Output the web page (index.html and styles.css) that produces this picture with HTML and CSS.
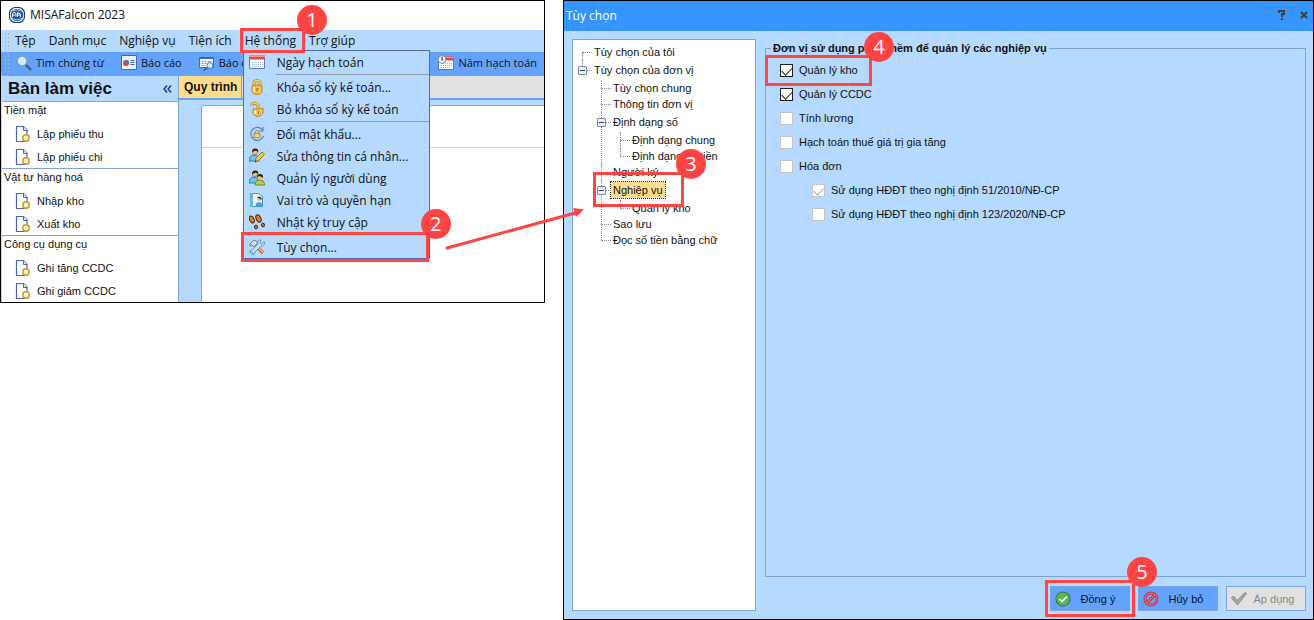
FILE: index.html
```html
<!DOCTYPE html>
<html lang="vi">
<head>
    <meta charset="UTF-8">
    <meta name="viewport" content="width=device-width, initial-scale=1.0">
    <title>MISAFalcon 2023 - Tùy chọn</title>
    <link rel="stylesheet" href="styles.css">
</head>
<body>
    <!-- Shared icons -->
    <svg class="sprite" aria-hidden="true">
        <symbol id="doc" viewBox="0 0 16 16">
            <path d="M1.500 .5h7l3.500 3.500v11.500h-10.500z" fill="#fff" stroke="#4a64ae" stroke-width="1.200"/>
            <path d="M8.500 .5v4h4" fill="#dfe8fb" stroke="#4a64ae"/>
            <circle cx="11" cy="12" r="3.200" fill="#fff3c4" stroke="#c69c33" stroke-width="1.500"/>
        </symbol>
        <symbol id="calendar" viewBox="0 0 16 16">
            <path d="M.5 2.500h15v12h-15z" fill="#fff" stroke="#5d79b4"/>
            <path d="M0 1.500h16v4H0z" fill="#d84a4e"/>
            <path d="M0 2.500h16" stroke="#ef9999"/>
            <path d="M3 8.500h11M3 10.500h11M3 12.500h9" stroke="#9bacd2" stroke-dasharray="1 1"/>
        </symbol>
        <symbol id="lock" viewBox="0 0 16 16">
            <path d="M5 8V4.500a3 3 0 0 1 6 0V8" fill="none" stroke="#b98a25" stroke-width="3"/>
            <path d="M5 8V4.500a3 3 0 0 1 6 0V8" fill="none" stroke="#f5d873" stroke-width="1.300"/>
            <path d="M3 7q5-2 10 0v5q0 3-5 3.500-5-.5-5-3.500z" fill="#f2c64d" stroke="#b98a25"/>
            <path d="M5 8v5" stroke="#fff0a8" stroke-width="1.500"/>
            <path d="M8 9v3.500M9 9v1" stroke="#8a6518"/>
        </symbol>
        <symbol id="people" viewBox="0 0 16 16">
            <path d="M0 13q0-6 5-6 4 0 5 4v2z" fill="#70bff0" stroke="#2f7dbb"/>
            <circle cx="6" cy="4" r="2.700" fill="#efc36b" stroke="#8b672b" stroke-width=".6"/>
            <path d="M3 4q0-4 4-3.500Q10 1 9 4L7 2.500z" fill="#222"/>
        </symbol>
    </svg>

    <main class="screen">
        <section class="app-window">
            <header class="app-title">
                <svg class="logo" viewBox="0 0 16 16">
                    <rect x=".5" y=".5" width="15" height="15" rx="6" fill="#fff" stroke="#123f88" stroke-width="1.200"/>
                    <circle cx="8" cy="8" r="6.200" fill="#1c57a4"/>
                    <path d="M3.500 10V6.500l2-1 1.500 1v3M3.500 8H6M8.500 10V5.500l3 1.500v3M8.500 8h3" fill="none" stroke="#fff"/>
                    <path d="M3 11.500q5 3 10 0M4 4q4-2.500 8 0" fill="none" stroke="#a9cff5"/>
                </svg>
                <h1>MISAFalcon 2023</h1>
            </header>

            <nav class="menubar">
                <span class="grip"></span>
                <button class="menu-button">Tệp</button>
                <button class="menu-button">Danh mục</button>
                <button class="menu-button">Nghiệp vụ</button>
                <button class="menu-button">Tiện ích</button>
                <div class="menu-open">
                    <button class="menu-button" aria-expanded="true">Hệ thống</button>
                    <div class="dropdown" role="menu">
                        <button class="dropdown-item" role="menuitem"><svg class="icon"><use href="#calendar"/></svg>Ngày hạch toán</button>
                        <hr>
                        <button class="dropdown-item" role="menuitem"><svg class="icon"><use href="#lock"/></svg>Khóa sổ kỳ kế toán...</button>
                        <button class="dropdown-item" role="menuitem">
                            <svg class="icon" viewBox="0 0 16 16">
                                <path d="M9 8V4q-2-3-6-1v2" fill="none" stroke="#b98a25" stroke-width="3"/>
                                <path d="M9 8V4q-2-3-6-1v2" fill="none" stroke="#f5d873" stroke-width="1.200"/>
                                <path d="M4 8q5 1 10-1v5q-1 3-5 3.500-4-.5-5-3z" fill="#f2c64d" stroke="#b98a25"/>
                                <path d="M6 9v4" stroke="#fff0a8" stroke-width="1.500"/>
                                <path d="M9.500 10v3" stroke="#8a6518"/>
                            </svg>Bỏ khóa sổ kỳ kế toán
                        </button>
                        <hr>
                        <button class="dropdown-item" role="menuitem">
                            <svg class="icon" viewBox="0 0 16 16">
                                <path d="M13.500 4A6.500 6.500 0 1 0 14.500 10M14 1v4h-4" fill="none" stroke="#5d81bd" stroke-width="1.200"/>
                                <path d="M6 8V6.500a2 2 0 0 1 4 0V8" fill="none" stroke="#b98a25"/>
                                <path d="M5 7.500h6v4H5z" fill="#f5d372" stroke="#b98a25"/>
                            </svg>Đổi mật khẩu...
                        </button>
                        <button class="dropdown-item" role="menuitem">
                            <svg class="icon" viewBox="0 0 16 16">
                                <use href="#people"/>
                                <path d="M6 14l1-4 6-6 2.500 2.500-6 6z" fill="#f5c750" stroke="#9d741d"/>
                                <path d="M6 14l1.500-1" stroke="#222"/>
                            </svg>Sửa thông tin cá nhân...
                        </button>
                        <button class="dropdown-item" role="menuitem">
                            <svg class="icon" viewBox="0 0 16 16">
                                <use href="#people"/>
                                <path d="M6 15q0-5 5-5 4 0 4.500 3.500V15z" fill="#b8c957" stroke="#768826"/>
                                <circle cx="11" cy="7.500" r="2.400" fill="#efc36b"/>
                                <path d="M8 7q0-3 3-3 3.500 0 3 4l-3-2z" fill="#222"/>
                            </svg>Quản lý người dùng
                        </button>
                        <button class="dropdown-item" role="menuitem">
                            <svg class="icon" viewBox="0 0 16 16">
                                <path d="M1.500 1.500h8l4 3v10h-12z" fill="#f5fbff" stroke="#3b92cf"/>
                                <path d="M1 1h3v14H1z" fill="#64b5e8"/>
                                <circle cx="10" cy="7" r="2.300" fill="#efc36b"/>
                                <path d="M8 6q2-3 4.500 0v2L10 6z" fill="#222"/>
                                <path d="M6.500 14q0-4 3.500-4 3 0 3.500 4z" fill="#4ba3e0"/>
                            </svg>Vai trò và quyền hạn
                        </button>
                        <button class="dropdown-item" role="menuitem">
                            <svg class="icon" viewBox="0 0 16 16">
                                <g fill="#f47a12" stroke="#1c1c1c" stroke-width=".9">
                                    <ellipse cx="2.800" cy="5.500" rx="2.200" ry="3.700" transform="rotate(-25 2.800 5.500)"/>
                                    <ellipse cx="9.500" cy="4.500" rx="2.300" ry="3.900" transform="rotate(-25 9.500 4.500)"/>
                                    <ellipse cx="7" cy="13" rx="1.500" ry="1.900"/>
                                    <ellipse cx="14" cy="11" rx="1.500" ry="1.900"/>
                                </g>
                            </svg>Nhật ký truy cập
                        </button>
                        <hr>
                        <div class="marked">
                            <button class="dropdown-item" role="menuitem">
                                <svg class="icon" viewBox="0 0 16 16">
                                    <path d="M7 7l7 7" stroke="#a66b1e" stroke-width="3.200"/>
                                    <path d="M7.500 7l6.500 6.500" stroke="#f5bf62" stroke-width="1.600"/>
                                    <path d="M1 5l4-4 4 2-4 5-2-2-2 1z" fill="#d7dce3" stroke="#6f7883"/>
                                    <path d="M15.500 3l-3 2-1.500-1 1-3q-4 0-3 4l-6 6q-3 0-2 3l2-1 1 1-1 2q3 0 3-3l6-6q4 0 3.500-4z" fill="#c6e1fa" stroke="#4c89c4" stroke-width=".8"/>
                                </svg>Tùy chọn...
                            </button>
                            <span class="callout callout-menu"><b class="badge">2</b></span>
                        </div>
                    </div>
                    <span class="callout callout-system"><b class="badge">1</b></span>
                </div>
                <button class="menu-button">Trợ giúp</button>
            </nav>

            <div class="toolbar">
                <span class="grip"></span>
                <button class="tool">
                    <svg class="icon" viewBox="0 0 16 16">
                        <path d="M9.500 9.500l5.500 5.500" stroke="#49618d" stroke-width="2.500"/>
                        <circle cx="6" cy="6" r="5" fill="#c8edff" stroke="#8399bb" stroke-width="1.400"/>
                    </svg>Tìm chứng từ
                </button>
                <button class="tool">
                    <svg class="icon" viewBox="0 0 16 16">
                        <path d="M.5 .5h15v14H.5z" fill="#eaf4ff" stroke="#4268b4"/>
                        <circle cx="5" cy="8" r="3" fill="#d9444d"/>
                        <path d="M5 8V5a3 3 0 0 1 3 3z" fill="#4875c7"/>
                        <path d="M9.500 5.500h4M9.500 7.500h4M9.500 9.500h4" stroke="#4665a5"/>
                    </svg>Báo cáo
                </button>
                <button class="tool">
                    <svg class="icon" viewBox="0 0 16 16">
                        <path d="M.5 2.500h14v10H.5z" fill="#fff" stroke="#4268b4"/>
                        <path d="M0 2h15v2H0z" fill="#4268b4"/>
                        <path d="M2.500 6.500h10M2.500 8.500h6M2.500 10.500h4" stroke="#7188b8" stroke-dasharray="2 1"/>
                        <path d="M8 13l-3 2.500" stroke="#49618d" stroke-width="2"/>
                        <circle cx="11" cy="10.500" r="3" fill="#c8edff" stroke="#5b76a8"/>
                    </svg>Báo cáo
                </button>
                <button class="tool tool-year">
                    <svg class="icon" viewBox="0 0 16 16">
                        <use href="#calendar"/>
                        <circle cx="4" cy="4.500" r="3.800" fill="#fff" stroke="#6f88b2"/>
                        <path d="M4 2v3h1.500" fill="none" stroke="#222"/>
                    </svg>Năm hạch toán
                </button>
            </div>

            <div class="workspace">
                <aside class="sidebar">
                    <div class="sidebar-head">
                        <h2>Bàn làm việc</h2>
                        <button class="collapse" aria-label="Thu gọn">
                            <svg viewBox="0 0 9 8"><path d="M4 .5L1 4l3 3.500M8 .5L5 4l3 3.500" fill="none" stroke="#0b2f87" stroke-width="1.300"/></svg>
                        </button>
                    </div>
                    <div class="side-group">
                        <h3>Tiền mặt</h3>
                        <a href="#" class="side-link"><svg class="icon"><use href="#doc"/></svg>Lập phiếu thu</a>
                        <a href="#" class="side-link"><svg class="icon"><use href="#doc"/></svg>Lập phiếu chi</a>
                    </div>
                    <div class="side-group">
                        <h3>Vật tư hàng hoá</h3>
                        <a href="#" class="side-link"><svg class="icon"><use href="#doc"/></svg>Nhập kho</a>
                        <a href="#" class="side-link"><svg class="icon"><use href="#doc"/></svg>Xuất kho</a>
                    </div>
                    <div class="side-group">
                        <h3>Công cụ dụng cụ</h3>
                        <a href="#" class="side-link"><svg class="icon"><use href="#doc"/></svg>Ghi tăng CCDC</a>
                        <a href="#" class="side-link"><svg class="icon"><use href="#doc"/></svg>Ghi giảm CCDC</a>
                    </div>
                </aside>
                <div class="process">
                    <div class="tab-row">
                        <button class="tab">Quy trình</button>
                    </div>
                    <div class="process-panel">
                        <div class="process-head"></div>
                    </div>
                </div>
            </div>
        </section>

        <section class="dialog">
            <header class="dialog-title">
                <h2>Tùy chọn</h2>
                <button class="title-button" aria-label="Trợ giúp">
                    <svg viewBox="0 0 8 10"><path d="M1 3V1h5v3H4v3M4 8v2" fill="none" stroke="#453f3c" stroke-width="2"/></svg>
                </button>
                <button class="title-button" aria-label="Đóng">
                    <svg viewBox="0 0 8 8"><path d="M1 1l6 6M7 1L1 7" stroke="#453f3c" stroke-width="2.200"/></svg>
                </button>
            </header>

            <div class="dialog-body">
                <ul class="tree">
                    <li><div class="node">Tùy chọn của tôi</div></li>
                    <li>
                        <div class="node parent"><button class="toggle" aria-label="Thu gọn"></button>Tùy chọn của đơn vị</div>
                        <ul>
                            <li><div class="node">Tùy chọn chung</div></li>
                            <li><div class="node">Thông tin đơn vị</div></li>
                            <li>
                                <div class="node parent"><button class="toggle" aria-label="Thu gọn"></button>Định dạng số</div>
                                <ul>
                                    <li><div class="node">Định dạng chung</div></li>
                                    <li><div class="node">Định dạng số tiền</div></li>
                                </ul>
                            </li>
                            <li><div class="node">Người ký</div></li>
                            <li>
                                <div class="node parent">
                                    <button class="toggle" aria-label="Thu gọn"></button>
                                    <span class="selected">Nghiệp vụ</span>
                                    <span class="callout callout-node"><b class="badge">3</b></span>
                                </div>
                                <ul>
                                    <li><div class="node">Quản lý kho</div></li>
                                </ul>
                            </li>
                            <li><div class="node">Sao lưu</div></li>
                            <li><div class="node">Đọc số tiền bằng chữ</div></li>
                        </ul>
                    </li>
                </ul>

                <div class="options">
                    <fieldset class="group">
                        <legend>Đơn vị sử dụng phần mềm để quản lý các nghiệp vụ</legend>
                        <div class="check">
                            <label><input type="checkbox" checked>Quản lý kho</label>
                            <span class="callout callout-check"><b class="badge">4</b></span>
                        </div>
                        <div class="check"><label><input type="checkbox" checked>Quản lý CCDC</label></div>
                        <div class="check"><label><input type="checkbox" class="muted">Tính lương</label></div>
                        <div class="check"><label><input type="checkbox" class="muted">Hạch toán thuế giá trị gia tăng</label></div>
                        <div class="check"><label><input type="checkbox" class="muted">Hóa đơn</label></div>
                        <div class="check nested"><label><input type="checkbox" class="muted" checked disabled>Sử dụng HĐĐT theo nghị định 51/2010/NĐ-CP</label></div>
                        <div class="check nested"><label><input type="checkbox" class="muted" disabled>Sử dụng HĐĐT theo nghị định 123/2020/NĐ-CP</label></div>
                    </fieldset>
                    <div class="actions">
                        <div class="marked">
                            <button class="action">
                                <svg class="icon" viewBox="0 0 16 16">
                                    <circle cx="8" cy="8" r="7" fill="#55b65b" stroke="#3a7d43" stroke-width="1.200"/>
                                    <path d="M4.500 8l2.500 2.500 5-5" fill="none" stroke="#fff" stroke-width="1.600"/>
                                </svg><span>Đồng ý</span>
                            </button>
                            <span class="callout callout-ok"><b class="badge">5</b></span>
                        </div>
                        <button class="action">
                            <svg class="icon" viewBox="0 0 16 16">
                                <circle cx="8" cy="8" r="6" fill="none" stroke="#b93546" stroke-width="3"/>
                                <path d="M4 12l8-8" stroke="#b93546" stroke-width="3"/>
                                <circle cx="8" cy="8" r="6" fill="none" stroke="#ef7c83"/>
                                <path d="M4 12l8-8" stroke="#ef7c83"/>
                            </svg><span>Hủy bỏ</span>
                        </button>
                        <button class="action" disabled>
                            <svg class="icon" viewBox="0 0 16 16"><path d="M.5 7l2-2L6 9.500 14 1.500l1.500 1L6.500 14z" fill="#a8a8a8" stroke="#8c8c8c"/></svg><span>Áp dụng</span>
                        </button>
                    </div>
                </div>
            </div>
        </section>

        <svg class="arrow" viewBox="0 0 140 46">
            <path d="M2 44L130 9" stroke="#ff4444" stroke-width="3" stroke-linecap="round"/>
            <path d="M128 4l11 1.500-8 7.500z" fill="#ff4444"/>
        </svg>
    </main>
</body>
</html>
```
FILE: styles.css
```css
* {
    box-sizing: border-box;
}

body {
    margin: 0;
    background-color: #fff;
    color: #111;
    font-family: "Liberation Sans", Arial, sans-serif;
    font-size: 11px;
}

h1, h2, h3 {
    margin: 0;
    font-size: inherit;
    font-weight: normal;
}

button {
    margin: 0;
    padding: 0;
    border: 0;
    background: none;
    color: inherit;
    font: inherit;
    white-space: nowrap;
}

.sprite {
    display: none;
}

.icon {
    width: 16px;
    height: 16px;
    flex: none;
}

.screen {
    position: relative;
    display: grid;
    grid-template-columns: 545fr 751fr;
    gap: 18px;
    align-items: start;
    min-height: 100vh;
}

/* Main window */
.app-window {
    border: 1px solid #000;
    min-width: 0;
}

.app-title {
    display: flex;
    align-items: center;
    gap: 5px;
    height: 29px;
    padding: 0 0 2px 8px;
    font-family: "Open Sans", sans-serif;
    font-size: 12px;
}

.logo {
    width: 16px;
    height: 16px;
}

.menubar {
    display: flex;
    align-items: center;
    gap: 13px;
    height: 22px;
    padding-left: 3px;
    background-color: #b5d9ff;
    font-family: "Open Sans", sans-serif;
    font-size: 12px;
}

.grip {
    width: 6px;
    height: 18px;
    margin-right: -8px;
    background-image: radial-gradient(#a9b2bd 1px, transparent 1px);
    background-size: 3px 4px;
}

.menu-button {
    height: 22px;
    padding-bottom: 2px;
}

.menu-open {
    position: relative;
}

.toolbar {
    display: flex;
    align-items: center;
    gap: 17px;
    height: 23px;
    padding: 0 7px 2px 3px;
    background-color: #63a3fe;
    font-family: "Open Sans", sans-serif;
}

.toolbar .grip {
    margin-right: -11px;
}

.tool {
    display: flex;
    align-items: center;
    gap: 4px;
}

.tool-year {
    margin-left: auto;
}

/* System menu */
.dropdown {
    position: absolute;
    z-index: 2;
    top: 20px;
    left: -2px;
    width: 187px;
    border: 1px solid #4a6eae;
    background-color: #b5d9ff;
}

.dropdown hr {
    height: 1px;
    margin: 1px 0 1px 32px;
    border: 0;
    background-color: #929aa5;
}

.dropdown-item {
    display: flex;
    align-items: center;
    gap: 12px;
    width: 100%;
    height: 22px;
    padding-left: 5px;
}

.marked {
    position: relative;
}

/* Numbered red frames */
.callout {
    position: absolute;
    z-index: 3;
    border: 3px solid #ff4444;
    pointer-events: none;
}

.badge {
    position: absolute;
    top: -26px;
    right: -25px;
    width: 30px;
    height: 30px;
    border-radius: 50%;
    background-color: #ff4444;
    color: #fff;
    font-family: "Open Sans", sans-serif;
    font-size: 20px;
    font-weight: normal;
    line-height: 30px;
    text-align: center;
}

.callout-system {
    inset: -2px -9px -1px -5px;
}

.callout-menu {
    inset: -4px 0 -4px -3px;
}

.callout-node {
    top: -8px;
    left: 1px;
    width: 91px;
    height: 35px;
}

.callout-check {
    inset: -3px auto -4px -15px;
    width: 107px;
}

.callout-ok {
    inset: -6px -5px;
}

/* Workspace */
.workspace {
    display: flex;
}

.sidebar {
    width: 178px;
    flex: none;
    border-right: 1px solid #7ba6dc;
    border-left: 1px solid #b5d9ff;
}

.sidebar-head {
    display: flex;
    align-items: center;
    justify-content: space-between;
    height: 27px;
    padding: 0 6px;
    border-top: 1px solid #7ba6dc;
    border-bottom: 1px solid #7ba6dc;
    background-color: #b5d9ff;
}

.sidebar-head h2 {
    font-size: 17px;
    font-weight: bold;
}

.collapse svg {
    display: block;
    width: 9px;
    height: 8px;
}

.side-group {
    border-bottom: 1px solid #7ba6dc;
}

.side-group:last-child {
    border-bottom: 0;
}

.side-group h3 {
    height: 20px;
    padding-left: 2px;
    line-height: 17px;
}

.side-link {
    display: flex;
    align-items: center;
    gap: 6px;
    height: 23px;
    padding-left: 13px;
    color: inherit;
    text-decoration: none;
}

.process {
    display: flex;
    flex: 1;
    flex-direction: column;
    background-color: #b5d9ff;
}

.tab-row {
    height: 25px;
    border-top: 1px solid #7ba6dc;
    border-bottom: 2px solid #63a3fe;
    background-color: #e1e1e1;
}

.tab {
    height: 22px;
    padding: 0 4px 0 5px;
    border-right: 1px solid #63a3fe;
    background-color: #ffdc8c;
    font-size: 12px;
    font-weight: bold;
}

.process-panel {
    flex: 1;
    margin: 5px 0 0 22px;
    border: solid #7ba6dc;
    border-width: 1px 0 0 1px;
    border-top-left-radius: 3px;
    background-color: #fff;
}

.process-head {
    height: 42px;
    border-bottom: 1px solid #c9d8ec;
}

/* Options dialog */
.dialog {
    display: flex;
    flex-direction: column;
    min-width: 0;
    min-height: 100vh;
    border: 1px solid #000;
    background-color: #b5d9ff;
}

.dialog-title {
    display: flex;
    align-items: center;
    gap: 14px;
    height: 30px;
    padding: 0 5px 2px 2px;
    background-color: #3594ff;
    color: #fff;
    font-family: "Open Sans", sans-serif;
    font-size: 12px;
}

.dialog-title h2 {
    flex: 1;
}

.title-button svg {
    display: block;
    width: 8px;
    height: 10px;
}

.dialog-body {
    display: flex;
    flex: 1;
    gap: 9px;
    padding: 8px 7px 8px 8px;
}

.tree,
.tree ul {
    margin: 0;
    padding: 0;
    list-style: none;
}

.tree {
    width: 184px;
    flex: none;
    padding-top: 4px;
    border: 1px solid #7ba6dc;
    background-color: #fff;
}

.tree ul {
    margin-left: 19px;
}

.tree li {
    position: relative;
}

/* dotted trunk */
.tree li::before {
    content: "";
    position: absolute;
    top: 0;
    bottom: 0;
    left: 9px;
    border-left: 1px dotted #8c8c8c;
}

.tree li:last-child::before {
    bottom: auto;
    height: 8px;
}

.tree > li:first-child::before {
    top: 8px;
}

.node {
    position: relative;
    height: 16px;
    padding-left: 21px;
    line-height: 16px;
    white-space: nowrap;
}

/* dotted branch */
.node::before {
    content: "";
    position: absolute;
    top: 50%;
    left: 9px;
    width: 10px;
    border-top: 1px dotted #8c8c8c;
}

.node.parent {
    display: flex;
    align-items: center;
    height: 20px;
}

.toggle {
    position: absolute;
    top: 6px;
    left: 5px;
    width: 9px;
    height: 9px;
    border: 1px solid #7f8b99;
    border-radius: 1px;
    background: linear-gradient(#1f3f9d, #1f3f9d) center / 5px 1px no-repeat #eef1f5;
}

.selected {
    margin-left: -2px;
    padding: 0 2px;
    outline: 1px dotted #222;
    background-color: #ffdc8c;
}

.options {
    display: flex;
    flex: 1;
    flex-direction: column;
    gap: 9px;
    min-width: 0;
}

.group {
    flex: 1;
    min-width: 0;
    margin: 0;
    padding: 1px 0 0 14px;
    border: 1px solid #7ba6dc;
}

.group legend {
    margin-left: -9px;
    padding: 0 2px;
    font-weight: bold;
    line-height: 18px;
}

.check {
    position: relative;
    height: 24px;
}

.check label {
    display: inline-flex;
    align-items: center;
    gap: 6px;
    height: 24px;
}

.check.nested {
    margin-left: 32px;
}

.check input {
    width: 13px;
    height: 13px;
    margin: 0;
    border: 1px solid #222;
    appearance: none;
    background-color: #fff;
}

.check input.muted {
    border-color: #c6c6c6;
}

.check input:checked::before {
    content: "";
    display: block;
    width: 9px;
    height: 5px;
    margin: 2px 1px;
    border: solid #222;
    border-width: 0 0 1px 1px;
    transform: rotate(-45deg);
}

.check input.muted:checked::before {
    border-color: #aaa;
}

.actions {
    display: flex;
    justify-content: flex-end;
    gap: 8px;
}

.action {
    display: flex;
    align-items: center;
    width: 80px;
    height: 25px;
    padding: 0 4px;
    border: 1px solid #7ba6dc;
    background-color: #63a3fe;
}

.action span {
    flex: 1;
    text-align: center;
}

.action:disabled {
    background-color: #e1e1e1;
    color: #888;
}

.arrow {
    position: absolute;
    z-index: 3;
    top: 204px;
    left: 445px;
    width: 140px;
    height: 46px;
}
```
